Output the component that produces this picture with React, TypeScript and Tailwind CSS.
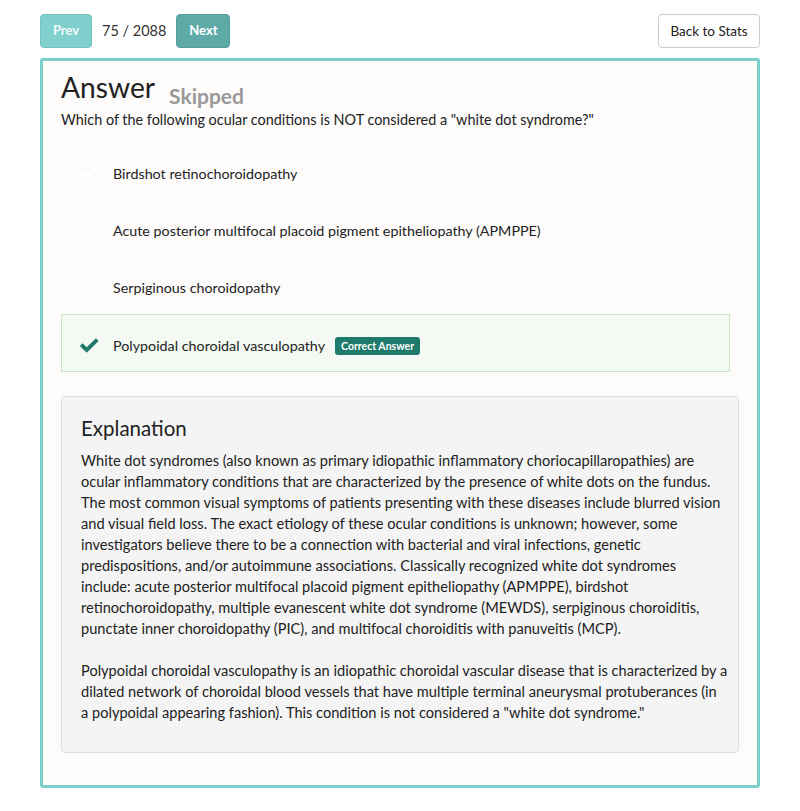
import React from "react";

const font = { fontFamily: "Lato, 'Open Sans', sans-serif" };

function Check({ className }: { className?: string }) {
  return (
    <svg viewBox="0 0 24 20" className={className} fill="currentColor">
      <path d="M2 10.5 L5 7.5 L9.5 12 L19.5 2 L22.5 5 L9.5 18 Z" />
    </svg>
  );
}

const options = [
  "Birdshot retinochoroidopathy",
  "Acute posterior multifocal placoid pigment epitheliopathy (APMPPE)",
  "Serpiginous choroidopathy",
];

const para1 = [
  "White dot syndromes (also known as primary idiopathic inflammatory choriocapillaropathies) are",
  "ocular inflammatory conditions that are characterized by the presence of white dots on the fundus.",
  "The most common visual symptoms of patients presenting with these diseases include blurred vision",
  "and visual field loss. The exact etiology of these ocular conditions is unknown; however, some",
  "investigators believe there to be a connection with bacterial and viral infections, genetic",
  "predispositions, and/or autoimmune associations. Classically recognized white dot syndromes",
  "include: acute posterior multifocal placoid pigment epitheliopathy (APMPPE), birdshot",
  "retinochoroidopathy, multiple evanescent white dot syndrome (MEWDS), serpiginous choroiditis,",
  "punctate inner choroidopathy (PIC), and multifocal choroiditis with panuveitis (MCP).",
];

const para2 = [
  "Polypoidal choroidal vasculopathy is an idiopathic choroidal vascular disease that is characterized by a",
  "dilated network of choroidal blood vessels that have multiple terminal aneurysmal protuberances (in",
  "a polypoidal appearing fashion). This condition is not considered a \"white dot syndrome.\"",
];

export default function App() {
  return (
    <div className="w-[800px] min-h-[811px] bg-white text-[#333]" style={font}>
      <div className="pl-[40px] pr-[40px] pt-[14px]">
        <div className="flex items-center h-[34px]">
          <button className="h-[34px] w-[52px] rounded-[4px] bg-[#80d0cd] border border-[#72c2bf] text-[#f4fbfb] font-bold text-[13px]">
            Prev
          </button>
          <span className="ml-[10px] text-[14.5px] text-[#333]">75 / 2088</span>
          <button className="ml-[10px] h-[34px] w-[54px] rounded-[4px] bg-[#5eaaa7] border border-[#579f9c] text-white font-bold text-[13px]">
            Next
          </button>
          <div className="flex-1" />
          <button className="h-[34px] w-[102px] rounded-[4px] bg-white border border-[#ccc] text-[#222] text-[13.5px]">
            Back to Stats
          </button>
        </div>
        <div className="mt-[10px] border-[3px] border-[#7dcfcc] rounded-[3px] bg-[#fdfcfb] pl-[18px] pr-[18px] pt-[6px] pb-[31px] h-[730px]">
          <div className="flex items-end">
            <h1 className="text-[28.2px] leading-[40px] text-[#222]">Answer</h1>
            <span className="ml-[14px] text-[21px] font-bold text-[#999] leading-[30px] translate-y-[4px]">
              Skipped
            </span>
          </div>
          <p className="text-[14.4px] leading-[20px] mt-[3px] text-[#222]">
            Which of the following ocular conditions is NOT considered a "white dot syndrome?"
          </p>
          <div className="mt-[13px] flex flex-col gap-[1px]">
            {options.map((o) => (
              <div key={o} className="flex items-center h-[56px] pt-[5px] pl-[16px] border border-transparent">
                <Check className="w-[22px] h-[19px] text-white" />
                <span className="ml-[13px] text-[14.3px] text-[#222]">{o}</span>
              </div>
            ))}
            <div className="flex items-center h-[58px] pt-[5px] pl-[16px] border border-[#c9e6c3] bg-[#f4faf3] mr-[9px]">
              <Check className="w-[22px] h-[19px] text-[#217a6b]" />
              <span className="ml-[13px] text-[14.3px] text-[#222]">Polypoidal choroidal vasculopathy</span>
              <span className="ml-[10px] bg-[#1e7a6a] text-white text-[10.5px] font-bold rounded-[3px] px-[6px] py-[2px] leading-[14px]">
                Correct Answer
              </span>
            </div>
          </div>
          <div className="mt-[24px] bg-[#f4f4f4] border border-[#dddddd] rounded-[4px] px-[19px] pt-[16px] pb-[29px]">
            <h2 className="text-[20.5px] leading-[30px] text-[#222]">Explanation</h2>
            <p className="mt-[7px] text-[14.6px] leading-[21px] text-[#222]">
              {para1.map((l, i) => (
                <span key={i} className="block whitespace-nowrap">{l}</span>
              ))}
            </p>
            <p className="mt-[21px] text-[14.6px] leading-[21px] text-[#222]">
              {para2.map((l, i) => (
                <span key={i} className="block whitespace-nowrap">{l}</span>
              ))}
            </p>
          </div>
        </div>
      </div>
    </div>
  );
}
